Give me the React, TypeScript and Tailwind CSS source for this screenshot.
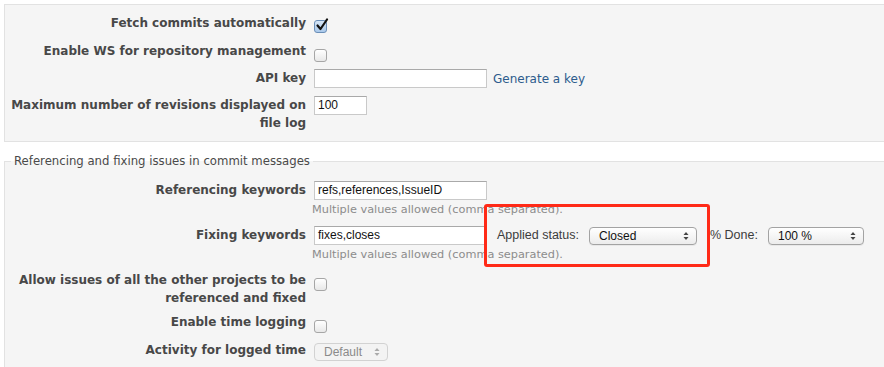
import React from 'react'

const font = { fontFamily: '"DejaVu Sans", Verdana, sans-serif' }
const uiFont = { fontFamily: '"Liberation Sans", Arial, sans-serif' }

function Checkbox({ checked = false }: { checked?: boolean }) {
  return (
    <span
      className={`relative inline-block w-[13px] h-[13px] rounded-[3px] border ${
        checked ? 'border-[#6b8fb8] bg-gradient-to-b from-[#d6e6f7] to-[#a9c8ea]' : 'border-[#a6a6a6] bg-gradient-to-b from-white to-[#e8e8e8]'
      }`}
    >
      {checked && (
        <svg viewBox="0 0 14 14" className="absolute -top-[3px] left-[0px] w-[14px] h-[14px]">
          <path d="M2.5 7.5 L5.5 11 L12 1.5" fill="none" stroke="#111" strokeWidth="2.2" strokeLinecap="round" strokeLinejoin="round" />
        </svg>
      )}
    </span>
  )
}

function Arrows({ color = '#444' }: { color?: string }) {
  return (
    <svg viewBox="0 0 6 10" className="w-[6px] h-[10px]">
      <path d="M0.5 4 L3 1 L5.5 4 Z" fill={color} />
      <path d="M0.5 6 L3 9 L5.5 6 Z" fill={color} />
    </svg>
  )
}

function Select({ value, width, disabled = false }: { value: string; width: string; disabled?: boolean }) {
  return (
    <div
      style={uiFont}
      className={`${width} h-[18px] flex items-center justify-between pl-[9px] pr-[7px] rounded-[4px] border text-[12px] ${
        disabled
          ? 'border-[#d2d2d2] bg-[#f3f3f3] text-[#8a8a8a]'
          : 'border-[#a3a3a3] bg-gradient-to-b from-white to-[#ececec] text-[#111] shadow-[0_1px_0_rgba(0,0,0,0.05)]'
      }`}
    >
      <span>{value}</span>
      <Arrows color={disabled ? '#aaa' : '#444'} />
    </div>
  )
}

function TextInput({ value = '', width }: { value?: string; width: string }) {
  return (
    <div
      style={uiFont}
      className={`${width} h-[19px] border border-[#c9c9c9] border-t-[#a9a9a9] bg-white pl-[3px] text-[12px] leading-[17px] text-[#111]`}
    >
      {value}
    </div>
  )
}

function Row({ label, children, className = '' }: { label: React.ReactNode; children?: React.ReactNode; className?: string }) {
  return (
    <div className={`flex items-start ${className}`}>
      <label className="w-[302px] shrink-0 pr-[1px] text-right font-bold text-[12px] leading-[18px] text-[#484848]">{label}</label>
      <div className="pl-[7px] flex flex-col">{children}</div>
    </div>
  )
}

function Hint() {
  return <em className="not-italic text-[11.3px] leading-[14px] text-[#8c8c8c] mt-[3px] -ml-[2px] block">Multiple values allowed (comma separated).</em>
}

export default function App() {
  return (
    <div style={font} className="relative w-[884px] h-[367px] overflow-hidden bg-white">
      {/* Repository settings */}
      <div className="ml-[4px] mt-[4px] border border-r-0 border-[#e2e2e2] bg-[#f5f5f5] pt-[9px] pb-[9px]">
        <Row label="Fetch commits automatically" className="h-[28px]">
          <div className="pt-[2px]"><Checkbox checked /></div>
        </Row>
        <Row label="Enable WS for repository management" className="h-[27px]">
          <div className="pt-[3px]"><Checkbox /></div>
        </Row>
        <Row label="API key" className="h-[27px]">
          <div className="flex items-center gap-[6px]">
            <TextInput width="w-[173px]" />
            <a className="text-[12px] text-[#2c5b8c]">Generate a key</a>
          </div>
        </Row>
        <Row
          label={
            <>
              Maximum number of revisions displayed on
              <br />
              file log
            </>
          }
        >
          <TextInput value="100" width="w-[53px]" />
        </Row>
      </div>

      {/* Referencing and fixing issues */}
      <fieldset className="ml-[4px] mt-[12px] border border-r-0 border-b-0 border-[#e2e2e2] bg-[#f5f5f5] pt-[13px] pb-[20px]">
        <legend className="ml-[6px] px-[3px] text-[11.7px] leading-[14px] text-[#4a4a4a]">Referencing and fixing issues in commit messages</legend>
        <Row label="Referencing keywords" className="mb-[9px]">
          <TextInput value="refs,references,IssueID" width="w-[173px]" />
          <Hint />
        </Row>
        <Row label="Fixing keywords" className="mb-[9px]">
          <div className="flex items-center">
            <TextInput value="fixes,closes" width="w-[173px]" />
            <span style={uiFont} className="ml-[10px] text-[12.5px] text-[#3c3c3c]">Applied status:</span>
            <div className="ml-[10px]">
              <Select value="Closed" width="w-[108px]" />
            </div>
            <span style={uiFont} className="ml-[13px] text-[12.5px] text-[#3c3c3c]">% Done:</span>
            <div className="ml-[10px]">
              <Select value="100 %" width="w-[96px]" />
            </div>
          </div>
          <Hint />
        </Row>
        <Row
          label={
            <>
              Allow issues of all the other projects to be
              <br />
              referenced and fixed
            </>
          }
          className="mb-[6px]"
        >
          <div className="pt-[3px]"><Checkbox /></div>
        </Row>
        <Row label="Enable time logging" className="mb-[1px]">
          <div className="pt-[3px]"><Checkbox /></div>
        </Row>
        <Row label="Activity for logged time">
          <div className="pt-[2px]"><Select value="Default" width="w-[74px]" disabled /></div>
        </Row>
      </fieldset>

      {/* Annotation */}
      <div className="absolute left-[484px] top-[204px] w-[226px] h-[63px] border-[3px] border-[#ff2a17] rounded-[3px]" />
    </div>
  )
}
